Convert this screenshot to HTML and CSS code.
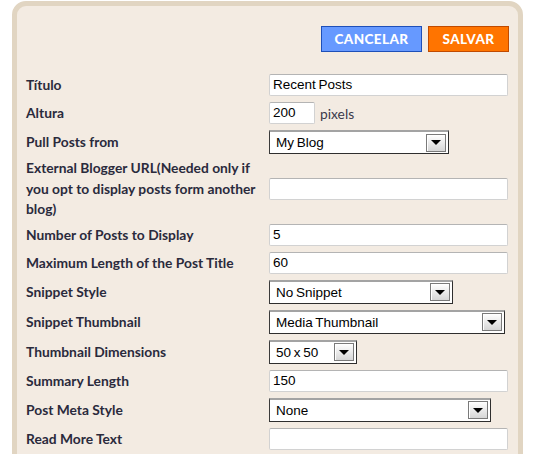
FILE: index.html
```html
<!DOCTYPE html>
<html lang="pt">
<head>
<meta charset="utf-8">
<title>Configurar Recent Posts</title>
<link rel="stylesheet" href="styles.css">
</head>
<body>
<div class="page">
  <div class="panel">
    <div class="actions">
      <button class="btn btn-cancel">CANCELAR</button>
      <button class="btn btn-save">SALVAR</button>
    </div>
    <div class="form">
      <div class="label">Título</div>
      <div class="ctrl"><div class="input w-full">Recent Posts</div></div>

      <div class="label">Altura</div>
      <div class="ctrl"><div class="input w-small">200</div><span class="unit">pixels</span></div>

      <div class="label">Pull Posts from</div>
      <div class="ctrl"><div class="select w-blog"><span class="val">My Blog</span><span class="arrow"></span></div></div>

      <div class="label label-multi">External Blogger URL(Needed only if you opt to display posts form another blog)</div>
      <div class="ctrl"><div class="input w-full"></div></div>

      <div class="label">Number of Posts to Display</div>
      <div class="ctrl"><div class="input w-full">5</div></div>

      <div class="label">Maximum Length of the Post Title</div>
      <div class="ctrl"><div class="input w-full">60</div></div>

      <div class="label">Snippet Style</div>
      <div class="ctrl"><div class="select w-snippet"><span class="val">No Snippet</span><span class="arrow"></span></div></div>

      <div class="label">Snippet Thumbnail</div>
      <div class="ctrl"><div class="select w-media"><span class="val">Media Thumbnail</span><span class="arrow"></span></div></div>

      <div class="label">Thumbnail Dimensions</div>
      <div class="ctrl"><div class="select w-dim"><span class="val">50 x 50</span><span class="arrow"></span></div></div>

      <div class="label">Summary Length</div>
      <div class="ctrl"><div class="input w-full">150</div></div>

      <div class="label">Post Meta Style</div>
      <div class="ctrl"><div class="select w-meta"><span class="val">None</span><span class="arrow"></span></div></div>

      <div class="label">Read More Text</div>
      <div class="ctrl"><div class="input w-full"></div></div>
    </div>
  </div>
</div>
</body>
</html>
```
FILE: styles.css
```css
html, body {
  margin: 0;
  padding: 0;
  background: #ffffff;
  overflow: hidden;
}
body {
  height: 454px;
}
.page {
  padding: 1px 0 0 12px;
}
.panel {
  box-sizing: border-box;
  width: 511px;
  height: 600px;
  background: #f3ebe2;
  border: 5px solid #e1d5c2;
  border-radius: 14px;
  padding: 20px 9px 0 9px;
}
.actions {
  display: flex;
  justify-content: flex-end;
  gap: 6px;
}
.btn {
  height: 26px;
  padding: 0;
  font-family: "Lato", "DejaVu Sans", sans-serif;
  font-weight: 900;
  font-size: 13.5px;
  color: #ffffff;
  letter-spacing: 0.4px;
  cursor: pointer;
}
.btn-cancel {
  width: 101px;
  background: #6699ff;
  border: 1px solid #1e4fb8;
}
.btn-save {
  width: 81px;
  background: #ff7400;
  border: 1px solid #c04a00;
}
.form {
  margin-top: 22px;
  display: grid;
  grid-template-columns: 235px auto;
  column-gap: 8px;
  row-gap: 6px;
  align-items: center;
}
.label {
  font-family: "Lato", "DejaVu Sans", sans-serif;
  font-weight: 700;
  font-size: 13.8px;
  color: #2a2a3c;
  line-height: 20px;
}
.label-multi {
  line-height: 20.5px;
  margin: -2px 0 -2px;
}
.ctrl {
  display: flex;
  align-items: center;
}
.input {
  box-sizing: border-box;
  height: 22px;
  background: #ffffff;
  border: 1px solid #d2d2d2;
  border-top-color: #b4b4b4;
  border-radius: 2px;
  padding: 0 3px;
  font-family: "Liberation Sans", Arial, sans-serif;
  font-size: 13.5px;
  line-height: 20px;
  color: #000000;
  word-spacing: -1px;
}
.w-full { width: 239px; }
.w-small { width: 46px; }
.unit {
  margin-left: 5px;
  font-family: "Lato", "DejaVu Sans", sans-serif;
  font-size: 13.8px;
  color: #3a3a4a;
}
.select {
  box-sizing: border-box;
  height: 24px;
  background: #ffffff;
  border-style: solid;
  border-width: 2px 1px 1px 1px;
  border-color: #a3a3a3 #2e2e2e #2e2e2e #3a3a3a;
  display: flex;
  align-items: center;
  justify-content: space-between;
  padding: 0 2px 0 6px;
  font-family: "Liberation Sans", Arial, sans-serif;
  font-size: 13.5px;
  color: #000000;
}
.select .val {
  word-spacing: -1px;
}
.arrow {
  box-sizing: border-box;
  width: 20px;
  height: 18px;
  border: 1px solid #7a7a7a;
  background: linear-gradient(#ffffff, #d6d6d6);
  box-shadow: inset 1px 1px 0 #ffffff;
  display: flex;
  align-items: center;
  justify-content: center;
}
.arrow::after {
  content: "";
  width: 0;
  height: 0;
  border-left: 5px solid transparent;
  border-right: 5px solid transparent;
  border-top: 5px solid #000000;
}
.w-blog { width: 180px; }
.w-snippet { width: 184px; }
.w-media { width: 236px; }
.w-dim { width: 88px; }
.w-meta { width: 222px; }
```
